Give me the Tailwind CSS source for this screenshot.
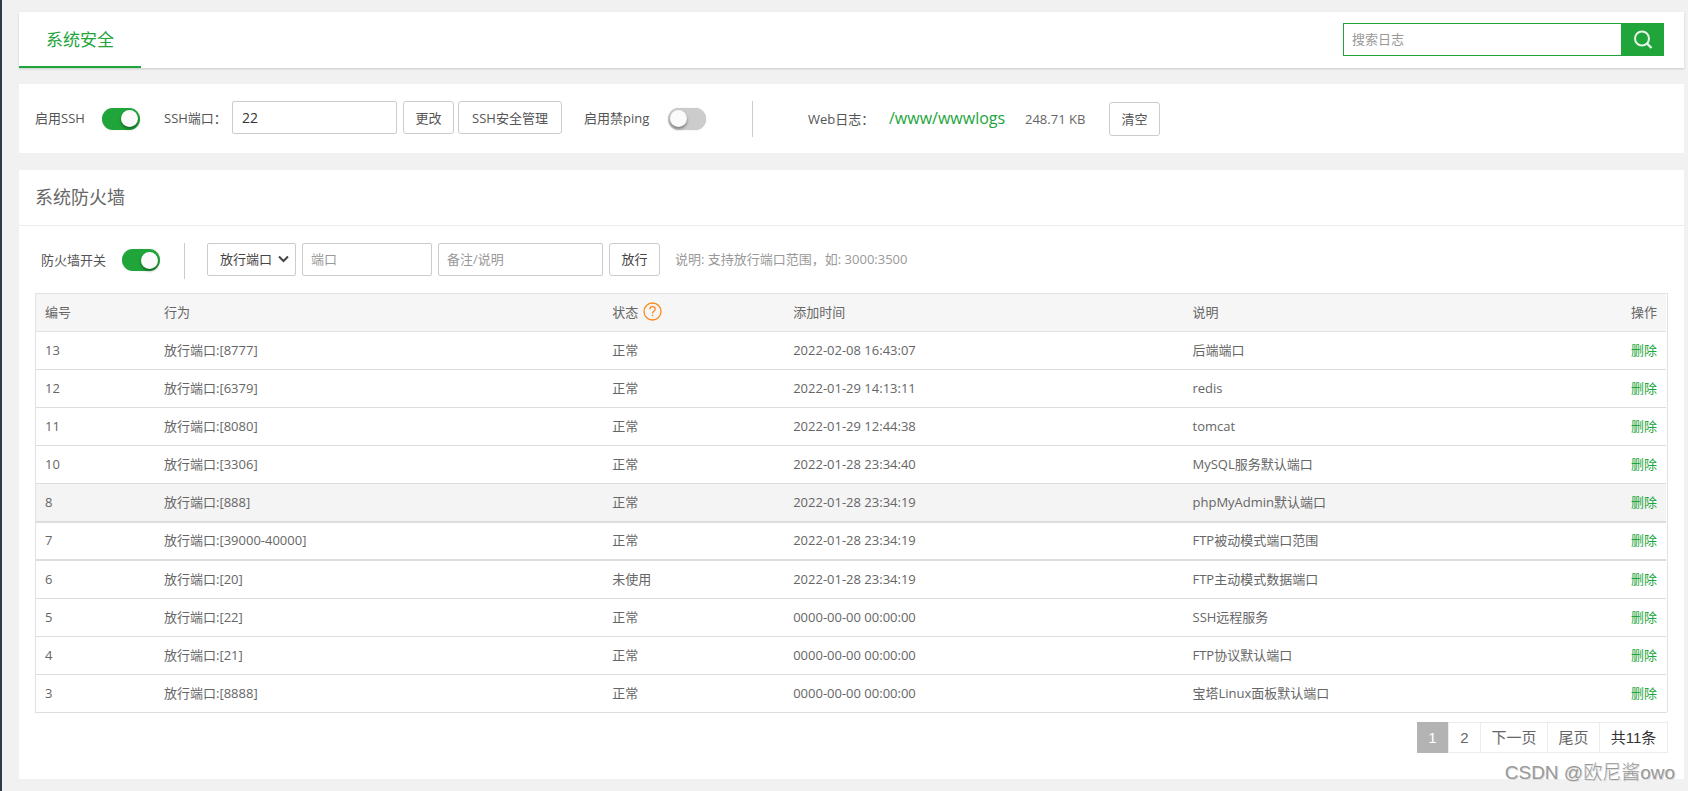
<!DOCTYPE html>
<html lang="zh-CN">
<head>
<meta charset="utf-8">
<meta name="viewport" content="width=device-width, initial-scale=1">
<title>系统安全</title>
<script src="https://cdn.jsdelivr.net/npm/@tailwindcss/browser@4"></script>
</head>
<body class="relative min-h-screen border-l-2 border-[#2f3b49] bg-[#f1f1f1] pt-3 pr-1 pb-3 pl-[17px] font-['Open_Sans','Noto_Sans_CJK_SC',sans-serif] text-[13px] leading-5 text-[#555]">

<header class="flex h-14 items-start justify-between bg-white pr-5 shadow-[0_1px_2px_rgba(0,0,0,0.16)]">
  <nav class="h-full">
    <a href="#" class="flex h-full w-[122px] justify-center border-b-2 border-[#20a53a] pt-4 text-[17px] leading-6 text-[#20a53a]">系统安全</a>
  </nav>
  <form class="mt-[11px] flex h-[33px] w-[321px]">
    <input type="search" aria-label="搜索日志" placeholder="搜索日志" class="min-w-0 flex-1 border border-r-0 border-[#20a53a] px-2 pb-[2px] outline-none placeholder:text-[#999]">
    <button type="button" aria-label="搜索" class="flex w-[43px] items-center justify-center bg-[#20a53a]">
      <svg width="20" height="20" viewBox="0 0 20 20" fill="none" stroke="#fff" stroke-opacity=".88" stroke-width="2"><circle cx="9" cy="8.500" r="7"/><path d="M14 13.500l4.500 4.500" stroke-width="2.400"/></svg>
    </button>
  </form>
</header>

<section class="mt-4 flex h-[69px] items-start bg-white pt-[17px] pl-4">
  <div class="flex h-[33px] items-center">
    <label for="ssh" class="w-[67px]">启用SSH</label>
    <input id="ssh" type="checkbox" checked class="relative mt-[2px] h-[22px] w-[38px] appearance-none rounded-full bg-[#ccc] shadow-[0_0_1px_rgba(0,0,0,0.3)] before:absolute before:top-[2px] before:left-[2px] before:size-[17px] before:rounded-full before:bg-[#fafafa] before:shadow-[0_2px_3px_rgba(0,0,0,0.4)] checked:bg-[#20a53a] checked:before:left-[19px]">
    <label for="sshport" class="ml-6 w-[68px]">SSH端口：</label>
    <input id="sshport" type="text" value="22" class="h-[33px] w-[165px] rounded-[2px] border border-[#ccc] px-[9px] text-sm text-[#333]">
    <button type="button" class="ml-[6px] h-[33px] w-[51px] rounded-[3px] border border-[#ccc]">更改</button>
    <button type="button" class="ml-1 h-[33px] w-[104px] rounded-[3px] border border-[#ccc]">SSH安全管理</button>
    <label for="ping" class="ml-[22px] w-[84px]">启用禁ping</label>
    <input id="ping" type="checkbox" class="relative mt-[2px] h-[22px] w-[38px] appearance-none rounded-full bg-[#ccc] shadow-[0_0_1px_rgba(0,0,0,0.3)] before:absolute before:top-[2px] before:left-[2px] before:size-[17px] before:rounded-full before:bg-[#fafafa] before:shadow-[0_2px_3px_rgba(0,0,0,0.4)] checked:bg-[#20a53a] checked:before:left-[19px]">
  </div>
  <div class="ml-[46px] flex h-9 items-center border-l border-[#ccc] pl-[55px]">
    <span class="w-[81px]">Web日志：</span>
    <a href="#" class="w-[136px] pb-[2px] text-base text-[#20a53a]">/www/wwwlogs</a>
    <span class="w-[84px] text-[#666]">248.71 KB</span>
    <button type="button" class="h-[34px] w-[51px] rounded-[3px] border border-[#ccc]">清空</button>
  </div>
</section>

<main class="mt-[17px] bg-white pb-[26px]">
  <h1 class="border-b border-[#ececec] px-4 pt-[15px] pb-4 text-lg leading-6 text-[#666]">系统防火墙</h1>
  <form class="flex items-start px-4 pt-[17px]">
    <div class="flex h-9 items-center border-r border-[#ccc] pr-[24px] pb-[2px] pl-[6px]">
      <label for="fw" class="w-[81px]">防火墙开关</label>
      <input id="fw" type="checkbox" checked class="relative h-[22px] w-[38px] appearance-none rounded-full bg-[#ccc] shadow-[0_0_1px_rgba(0,0,0,0.3)] before:absolute before:top-[3px] before:left-[2px] before:size-[17px] before:rounded-full before:bg-[#fafafa] before:shadow-[0_2px_3px_rgba(0,0,0,0.4)] checked:bg-[#20a53a] checked:before:left-[19px]">
    </div>
    <div class="ml-[22px] flex h-[33px] items-center">
      <div class="relative">
        <select aria-label="类型" class="block h-[33px] w-[89px] appearance-none rounded-[2px] border border-[#ccc] bg-white pb-[2px] pl-3 text-[#444]"><option>放行端口</option><option>屏蔽IP</option></select>
        <svg class="pointer-events-none absolute top-[12px] right-[7px]" width="11" height="8" viewBox="0 0 11 8" fill="none" stroke="#444" stroke-width="2"><path d="M1 1.500l4.500 4.500 4.500-4.500"/></svg>
      </div>
      <input type="text" aria-label="端口" placeholder="端口" class="ml-[6px] h-[33px] w-[130px] rounded-[2px] border border-[#ccc] px-2 pb-[2px] placeholder:text-[#999]">
      <input type="text" aria-label="备注/说明" placeholder="备注/说明" class="ml-[6px] h-[33px] w-[165px] rounded-[2px] border border-[#ccc] px-2 pb-[2px] placeholder:text-[#999]">
      <button type="button" class="ml-[6px] h-[33px] w-[51px] rounded-[3px] border border-[#ccc] pb-[2px] text-[#444]">放行</button>
      <span class="ml-[15px] pb-[2px] text-[#999]">说明: 支持放行端口范围，如: 3000:3500</span>
    </div>
  </form>

  <div class="mx-4 mt-[14px] border border-[#e2e2e2] border-b-0 pr-px">
    <table class="w-full table-fixed border-separate border-spacing-0 text-left text-[#666] [&_a]:text-[#20a53a] [&_td]:h-[38px] [&_td]:border-b [&_td]:border-[#ddd] [&_td]:px-[9px] [&_td]:pb-[2px] [&_th]:h-[38px] [&_th]:border-b [&_th]:border-[#e2e2e2] [&_th]:px-[9px] [&_th]:pb-[2px] [&_th]:font-normal">
      <thead class="bg-[#f6f6f6]">
        <tr><th class="w-[7.3%]">编号</th><th class="w-[27.5%]">行为</th><th class="w-[11.1%]"><span class="flex items-center gap-[5px]">状态 <a href="#" aria-label="状态说明"><svg class="block" width="19" height="19" viewBox="0 0 19 19" fill="none" stroke="#fc8a1c" stroke-width="1.300"><circle cx="9.500" cy="9.500" r="8.500"/><path d="M6.800 7.300c0-1.700 1.100-2.700 2.700-2.700s2.700 1 2.700 2.500c0 2-2.700 2.100-2.700 4.300M9.500 12.800v1.500"/></svg></a></span></th><th class="w-[24.5%]">添加时间</th><th>说明</th><th class="w-[60px] text-right">操作</th></tr>
      </thead>
      <tbody>
        <tr><td>13</td><td>放行端口:[8777]</td><td>正常</td><td>2022-02-08 16:43:07</td><td>后端端口</td><td class="text-right"><a href="#">删除</a></td></tr>
        <tr><td>12</td><td>放行端口:[6379]</td><td>正常</td><td>2022-01-29 14:13:11</td><td>redis</td><td class="text-right"><a href="#">删除</a></td></tr>
        <tr><td>11</td><td>放行端口:[8080]</td><td>正常</td><td>2022-01-29 12:44:38</td><td>tomcat</td><td class="text-right"><a href="#">删除</a></td></tr>
        <tr><td>10</td><td>放行端口:[3306]</td><td>正常</td><td>2022-01-28 23:34:40</td><td>MySQL服务默认端口</td><td class="text-right"><a href="#">删除</a></td></tr>
        <tr class="bg-[#f4f4f4] [&>td]:h-[39px]! [&>td]:border-b-2!"><td>8</td><td>放行端口:[888]</td><td>正常</td><td>2022-01-28 23:34:19</td><td>phpMyAdmin默认端口</td><td class="text-right"><a href="#">删除</a></td></tr>
        <tr class="[&>td]:border-b-2!"><td>7</td><td>放行端口:[39000-40000]</td><td>正常</td><td>2022-01-28 23:34:19</td><td>FTP被动模式端口范围</td><td class="text-right"><a href="#">删除</a></td></tr>
        <tr><td>6</td><td>放行端口:[20]</td><td>未使用</td><td>2022-01-28 23:34:19</td><td>FTP主动模式数据端口</td><td class="text-right"><a href="#">删除</a></td></tr>
        <tr><td>5</td><td>放行端口:[22]</td><td>正常</td><td>0000-00-00 00:00:00</td><td>SSH远程服务</td><td class="text-right"><a href="#">删除</a></td></tr>
        <tr><td>4</td><td>放行端口:[21]</td><td>正常</td><td>0000-00-00 00:00:00</td><td>FTP协议默认端口</td><td class="text-right"><a href="#">删除</a></td></tr>
        <tr><td>3</td><td>放行端口:[8888]</td><td>正常</td><td>0000-00-00 00:00:00</td><td>宝塔Linux面板默认端口</td><td class="text-right"><a href="#">删除</a></td></tr>
      </tbody>
    </table>
  </div>

  <nav aria-label="分页" class="mx-4 mt-[9px] flex h-[31px] justify-end font-['Liberation_Sans','Noto_Sans_CJK_SC',sans-serif] text-[15px] text-[#666]">
    <span aria-current="page" class="flex w-[31px] items-center justify-center bg-[#b3b3b3] text-white">1</span>
    <a href="#" class="flex w-[33px] items-center justify-center border border-[#ececec]">2</a>
    <a href="#" class="flex w-[67px] items-center justify-center border border-l-0 border-[#ececec]">下一页</a>
    <a href="#" class="flex w-[52px] items-center justify-center border border-l-0 border-[#ececec]">尾页</a>
    <span class="flex w-[68px] items-center justify-center border border-l-0 border-[#ececec] text-[#333]">共11条</span>
  </nav>
</main>

<p class="absolute right-[13px] bottom-[6px] font-['Liberation_Sans','Noto_Sans_CJK_SC',sans-serif] text-[19px] leading-6 font-light text-[#999] [text-shadow:1px_1px_0_#ddd]">CSDN @欧尼酱owo</p>
</body>
</html>
